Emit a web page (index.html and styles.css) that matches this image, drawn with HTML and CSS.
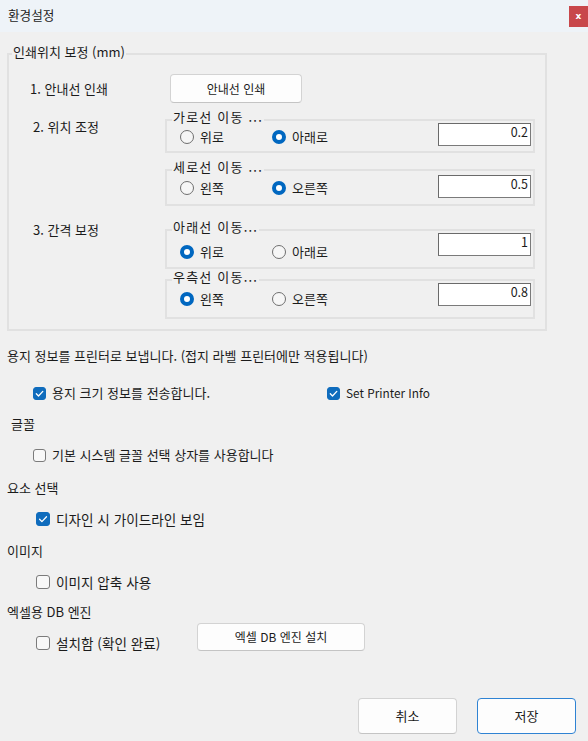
FILE: index.html
```html
<!DOCTYPE html>
<html lang="ko">
<head>
<meta charset="utf-8">
<title>환경설정</title>
<link rel="stylesheet" href="styles.css">
</head>
<body>
<div class="window">
  <header class="titlebar">
    <span class="title">환경설정</span>
    <span class="close">x</span>
  </header>

  <section class="group outer">
    <span class="group-title outer-title">인쇄위치 보정 (mm)</span>

    <div class="row row1">
      <span class="row-label lbl1">1. 안내선 인쇄</span>
      <button class="btn btn-guide">안내선 인쇄</button>
    </div>

    <div class="row row2">
      <span class="row-label lbl2">2. 위치 조정</span>
      <div class="subs">
        <div class="group sub sub1">
          <span class="group-title sub-title">가로선 이동 ...</span>
          <div class="radios">
            <label class="radio first"><span class="rb"></span>위로</label>
            <label class="radio"><span class="rb on"></span>아래로</label>
          </div>
          <div class="num">0.2</div>
        </div>
        <div class="group sub sub2">
          <span class="group-title sub-title">세로선 이동 ...</span>
          <div class="radios">
            <label class="radio first"><span class="rb"></span>왼쪽</label>
            <label class="radio"><span class="rb on"></span>오른쪽</label>
          </div>
          <div class="num">0.5</div>
        </div>
      </div>
    </div>

    <div class="row row3">
      <span class="row-label lbl3">3. 간격 보정</span>
      <div class="subs">
        <div class="group sub sub3">
          <span class="group-title sub-title">아래선 이동...</span>
          <div class="radios">
            <label class="radio first"><span class="rb on"></span>위로</label>
            <label class="radio"><span class="rb"></span>아래로</label>
          </div>
          <div class="num">1</div>
        </div>
        <div class="group sub sub4">
          <span class="group-title sub-title">우측선 이동...</span>
          <div class="radios">
            <label class="radio first"><span class="rb on"></span>왼쪽</label>
            <label class="radio"><span class="rb"></span>오른쪽</label>
          </div>
          <div class="num">0.8</div>
        </div>
      </div>
    </div>
  </section>

  <div class="opts">
    <div class="note">용지 정보를 프린터로 보냅니다. (접지 라벨 프린터에만 적용됩니다)</div>
    <div class="cbrow">
      <label class="check check-paper"><span class="cb on"><svg viewBox="0 0 13 13"><path d="M3.3 6.8 L5.5 9 L9.8 4.4" fill="none" stroke="#fff" stroke-width="1.3" stroke-linecap="round" stroke-linejoin="round"/></svg></span>용지 크기 정보를 전송합니다.</label>
      <label class="check check-printer"><span class="cb on"><svg viewBox="0 0 13 13"><path d="M3.3 6.8 L5.5 9 L9.8 4.4" fill="none" stroke="#fff" stroke-width="1.3" stroke-linecap="round" stroke-linejoin="round"/></svg></span>Set Printer Info</label>
    </div>

    <div class="head head-font">글꼴</div>
    <label class="check check-font"><span class="cb"></span>기본 시스템 글꼴 선택 상자를 사용합니다</label>

    <div class="head head-sel">요소 선택</div>
    <label class="check check-lg check-guide"><span class="cb lg on"><svg viewBox="0 0 14 14"><path d="M3.6 7.3 L5.9 9.6 L10.5 4.8" fill="none" stroke="#fff" stroke-width="1.3" stroke-linecap="round" stroke-linejoin="round"/></svg></span>디자인 시 가이드라인 보임</label>

    <div class="head head-img">이미지</div>
    <label class="check check-lg check-img"><span class="cb lg"></span>이미지 압축 사용</label>

    <div class="head head-db">엑셀용 DB 엔진</div>
    <div class="dbrow">
      <label class="check check-lg check-db"><span class="cb lg"></span>설치함 (확인 완료)</label>
      <button class="btn btn-db">엑셀 DB 엔진 설치</button>
    </div>
  </div>

  <footer class="footer">
    <button class="btn btn-foot">취소</button>
    <button class="btn btn-foot btn-primary">저장</button>
  </footer>
</div>
</body>
</html>
```

FILE: styles.css
```css
* { box-sizing: border-box; }

html, body {
  margin: 0;
  padding: 0;
  background: #f0f0f0;
}

body {
  font-family: "Noto Sans CJK KR", "Noto Sans", sans-serif;
  font-size: 13px;
  line-height: 16px;
  color: #1b1b1b;
}

.window {
  width: 588px;
  height: 741px;
  display: flex;
  flex-direction: column;
}

/* title bar */
.titlebar {
  height: 32px;
  background: #eef3f8;
  display: flex;
  justify-content: space-between;
  align-items: flex-start;
}
.title {
  font-size: 12.6px;
  padding: 7px 0 0 8px;
}
.close {
  width: 19px;
  height: 21px;
  margin-top: 6px;
  background: #c8474b;
  color: #fff;
  font-family: "DejaVu Sans", sans-serif;
  font-size: 9px;
  font-weight: bold;
  line-height: 20px;
  text-align: center;
}

/* group boxes */
.group {
  position: relative;
  border: 2px solid #e1e1e1;
}
.group-title {
  position: absolute;
  background: #f0f0f0;
  padding: 0 1px;
  white-space: nowrap;
  line-height: 16px;
}
.outer-title { left: 3px; top: -11px; }
.sub-title { left: 5px; top: -12px; letter-spacing: 1.2px; }

.outer {
  margin: 21px 0 0 7px;
  width: 540px;
  padding: 19px 10px 10px 0;
  display: flex;
  flex-direction: column;
}

.row {
  display: flex;
  align-items: flex-start;
}
.row-label {
  width: 156px;
  flex: none;
}
.row1 { align-items: center; height: 29px; }
.lbl1 { padding-left: 21px; }
.lbl2 { padding-left: 24px; }
.lbl3 { padding-left: 24px; margin-top: -7px; }
.row2 { margin-top: 16px; }
.row3 { margin-top: 23px; }

.subs {
  width: 370px;
  display: flex;
  flex-direction: column;
}

.sub {
  display: flex;
  justify-content: space-between;
  align-items: flex-start;
  padding: 0 2px 0 13px;
}
.sub1 { height: 34px; --rt: 8px; --it: 2px; }
.sub2 { height: 37px; margin-top: 16px; --rt: 9px; --it: 4px; }
.sub3 { height: 40px; --rt: 13px; --it: 2px; }
.sub4 { height: 40px; margin-top: 10px; --rt: 10px; --it: 2px; }

.radios {
  display: flex;
  margin-top: var(--rt);
}
.radio {
  display: flex;
  align-items: center;
  gap: 6px;
}
.radio.first { width: 92px; }

.rb {
  width: 14px;
  height: 14px;
  border-radius: 50%;
  border: 1px solid #6f6f6f;
  background: #f6f6f6;
  flex: none;
}
.rb.on {
  border: 4px solid #0067c0;
  background: #ffffff;
}

.num {
  margin-top: var(--it);
  width: 93px;
  height: 23px;
  background: #ffffff;
  border: 1px solid #7a7a7a;
  border-top-color: #6a6a6a;
  border-left-color: #6a6a6a;
  text-align: right;
  padding: 0 2px 0 0;
  font-size: 12.5px;
  line-height: 16px;
}

/* buttons */
.btn {
  font-family: "Noto Sans CJK KR", "Noto Sans", sans-serif;
  font-size: 12px;
  color: #1b1b1b;
  background: #fdfdfd;
  border: 1px solid #d3d3d3;
  border-bottom-color: #c4c4c4;
  border-radius: 4px;
  padding: 0;
  line-height: 16px;
}
.btn-guide {
  width: 132px;
  height: 29px;
  margin-left: 5px;
}

/* options */
.opts {
  display: flex;
  flex-direction: column;
  align-items: flex-start;
}
.note {
  margin-top: 17px;
  padding-left: 7px;
  font-size: 13px;
}
.cbrow {
  margin-top: 21px;
  display: flex;
  padding-left: 33px;
}
.check {
  display: flex;
  align-items: center;
  gap: 6px;
}
.check-paper { width: 294px; }
.check-printer { font-size: 11.8px; }

.cb {
  width: 13px;
  height: 13px;
  border-radius: 3px;
  border: 1px solid #7b7b7b;
  background: #f8f8f8;
  flex: none;
  display: flex;
}
.cb.lg { width: 14px; height: 14px; }
.cb.on {
  background: #0f6cbd;
  border-color: #0f6cbd;
}
.cb svg {
  margin: -1px;
  flex: none;
  width: calc(100% + 2px);
  height: calc(100% + 2px);
}

.head { padding-left: 7px; }
.head-font { margin-top: 15px; padding-left: 11px; }
.head-sel { margin-top: 17px; }
.head-img { margin-top: 16px; }
.head-db { margin-top: 14px; }

.check-font { margin-top: 15px; margin-left: 33px; }
.check-lg { font-size: 13.6px; }
.check-guide { margin-top: 15px; margin-left: 36px; }
.check-img { margin-top: 15px; margin-left: 36px; }

.dbrow {
  margin-top: 3px;
  display: flex;
  align-items: flex-start;
  padding-left: 36px;
}
.check-db {
  width: 161px;
  margin-top: 12px;
}
.btn-db {
  width: 168px;
  height: 28px;
  font-size: 12px;
}

.footer {
  margin-top: 47px;
  display: flex;
  justify-content: flex-end;
  gap: 20px;
  padding-right: 12px;
}
.btn-foot {
  width: 99px;
  height: 36px;
  font-size: 13px;
}
.btn-primary {
  border: 1px solid #2f83d3;
}
```
